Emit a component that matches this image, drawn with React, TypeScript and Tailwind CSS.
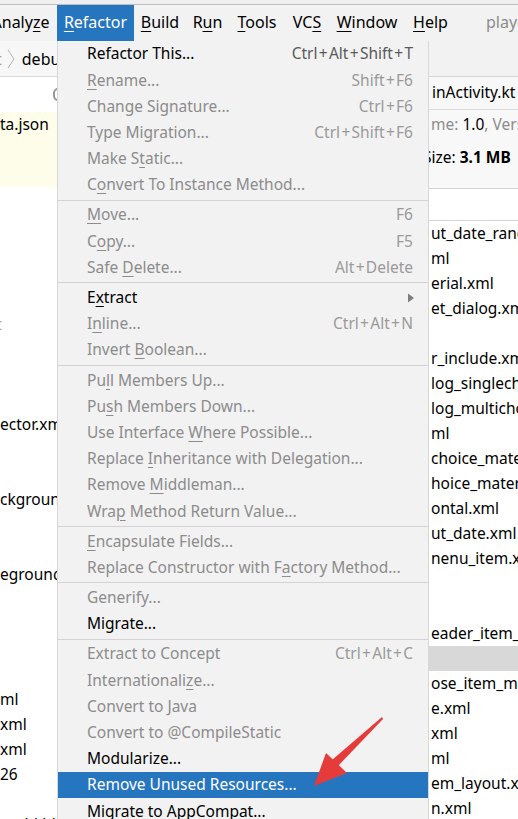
import React from 'react'

// IDE "Refactor" menu opened over the project / APK panels

type Item = {
  label: string
  shortcut?: string
  enabled?: boolean
  active?: boolean
  submenu?: boolean
  dark?: boolean
}

type Entry = Item | 'sep'

const MENU: Entry[] = [
  { label: 'Refactor This...', shortcut: 'Ctrl+Alt+Shift+T', enabled: true, dark: true },
  { label: '&Rename...', shortcut: 'Shift+F6' },
  { label: 'Change Signature...', shortcut: 'Ctrl+F6' },
  { label: 'Type Migration...', shortcut: 'Ctrl+Shift+F6' },
  { label: 'Make S&tatic...' },
  { label: 'C&onvert To Instance Method...' },
  'sep',
  { label: '&Move...', shortcut: 'F6' },
  { label: 'C&opy...', shortcut: 'F5' },
  { label: 'Safe &Delete...', shortcut: 'Alt+Delete' },
  'sep',
  { label: 'E&xtract', enabled: true, submenu: true },
  { label: 'I&nline...', shortcut: 'Ctrl+Alt+N' },
  { label: 'Invert &Boolean...' },
  'sep',
  { label: 'Pu&ll Members Up...' },
  { label: 'Pu&sh Members Down...' },
  { label: 'Use Interface &Where Possible...' },
  { label: 'Replace &Inheritance with Delegation...' },
  { label: 'Remove &Middleman...' },
  { label: 'Wra&p Method Return Value...' },
  'sep',
  { label: '&Encapsulate Fields...' },
  { label: 'Replace Constructor with F&actory Method...' },
  'sep',
  { label: 'Generify...' },
  { label: 'Migrate...', enabled: true },
  'sep',
  { label: 'Extract to Concept', shortcut: 'Ctrl+Alt+C' },
  { label: 'Internationali&ze...' },
  { label: 'Convert to Java' },
  { label: 'Convert to @CompileStatic' },
  { label: 'Modularize...', enabled: true },
  { label: 'Remove Unused Resources...', enabled: true, active: true },
  { label: 'Migrate to AppCompat...', enabled: true },
]

const BAR = [
  { label: 'Analy&ze', w: 'w-[73px] -ml-[16px]' },
  { label: '&Refactor', w: 'w-[77px]', active: true },
  { label: '&Build', w: 'w-[52px]' },
  { label: 'R&un', w: 'w-[43px]' },
  { label: '&Tools', w: 'w-[56px]' },
  { label: 'VC&S', w: 'w-[44px]' },
  { label: '&Window', w: 'w-[76px]' },
  { label: '&Help', w: 'w-[51px]' },
]

const LEFT_ROWS: { text: string; gray?: boolean; shift?: string }[] = [
  { text: '' }, { text: '' }, { text: '' }, { text: '' }, { text: '' },
  { text: 't', gray: true, shift: '-ml-[4px]' },
  { text: '' }, { text: '' }, { text: '' },
  { text: 'ector.xml' },
  { text: '' }, { text: '' },
  { text: 'ckground' },
  { text: '' }, { text: '' },
  { text: 'eground' },
  { text: '' }, { text: '' }, { text: '' }, { text: '' },
  { text: 'ml' },
  { text: 'xml' },
  { text: 'xml' },
  { text: '26' },
  { text: '' },
  { text: 'u_bkbk', shift: 'ml-[8px]' },
]

const RIGHT_ROWS: { text: string; band?: boolean }[] = [
  { text: 'ut_date_range.xml' },
  { text: 'ml' },
  { text: 'erial.xml' },
  { text: 'et_dialog.xml' },
  { text: '' },
  { text: 'r_include.xml' },
  { text: 'log_singlechoice' },
  { text: 'log_multichoice' },
  { text: 'ml' },
  { text: 'choice_material' },
  { text: 'hoice_material' },
  { text: 'ontal.xml' },
  { text: 'ut_date.xml' },
  { text: 'nenu_item.xml' },
  { text: '' },
  { text: '' },
  { text: 'eader_item_layout' },
  { text: '', band: true },
  { text: 'ose_item_material' },
  { text: 'e.xml' },
  { text: 'xml' },
  { text: 'ml' },
  { text: 'em_layout.xml' },
  { text: 'n.xml' },
]

function Label({ text }: { text: string }) {
  const i = text.indexOf('&')
  if (i < 0) return <>{text}</>
  return (
    <>
      {text.slice(0, i)}
      <span className="underline underline-offset-[3px] decoration-1">{text[i + 1]}</span>
      {text.slice(i + 2)}
    </>
  )
}

// the '+' in keystrokes is drawn wider than in Noto Sans
function Shortcut({ keys }: { keys: string }) {
  const parts = keys.split('+')
  return (
    <>
      {parts.map((p, i) => (
        <React.Fragment key={i}>
          {i > 0 && <span className="mx-[1.3px]">+</span>}
          {p}
        </React.Fragment>
      ))}
    </>
  )
}

function MenuRow({ item }: { item: Item }) {
  const color = item.active ? 'bg-[#2675bf] text-white' : item.enabled ? 'text-black' : 'text-[#8c8c8c]'
  const sc = item.dark ? 'text-[#5a5a5a]' : 'text-[#9a9a9a]'
  return (
    <div className={`flex items-center justify-between h-[26.2px] pl-[29px] pr-[15px] whitespace-nowrap ${color}`}>
      <span>
        <Label text={item.label} />
      </span>
      {item.shortcut && (
        <span className={sc}>
          <Shortcut keys={item.shortcut} />
        </span>
      )}
      {item.submenu && (
        <svg width="8" height="10" viewBox="0 0 8 10" className="mr-[-2px]">
          <path d="M1 0.5 L7 5 L1 9.5 Z" fill="#7d7d7d" />
        </svg>
      )}
    </div>
  )
}

export default function App() {
  return (
    <div className="relative w-[518px] h-[819px] overflow-hidden bg-white font-['Noto_Sans','Open_Sans',sans-serif] text-[15.5px] leading-none text-black">
      {/* menu bar */}
      <div className="h-[4px] bg-[#efefef]" />
      <div className="flex items-stretch h-[37px] bg-[#f2f2f2] border-t border-[#bdbdbd] text-[16px] whitespace-nowrap">
        {BAR.map(b => (
          <div
            key={b.label}
            className={`flex items-center justify-center shrink-0 ${b.w} ${b.active ? 'bg-[#2675bf] text-white' : 'text-black'}`}
          >
            <span className="-mt-[2px]">
              <Label text={b.label} />
            </span>
          </div>
        ))}
        <div className="flex items-center ml-[30px] text-[#8c8c8c]">
          <span className="-mt-[2px]">player</span>
        </div>
      </div>

      <div className="flex">
        {/* left project panel */}
        <div className="w-[57px] shrink-0 overflow-hidden whitespace-nowrap">
          <div className="flex items-center h-[36px] bg-[#f7f7f7] border-b border-[#d9d9d9] text-[16px]">
            <span className="shrink-0 -ml-[4px] text-[#a0a0a0]">t</span>
            <svg width="8" height="20" viewBox="0 0 8 20" className="shrink-0 ml-[5px]">
              <path d="M1 1 L7 10 L1 19" fill="none" stroke="#b4b4b4" strokeWidth="1" />
            </svg>
            <span className="shrink-0 ml-[7px]">debug</span>
          </div>
          <div className="flex items-center justify-end h-[35px]">
            <div className="shrink-0 w-[10px] h-[13px] -mr-[6px] rounded-full border-2 border-[#9a9a9a]" />
          </div>
          <div className="bg-[#fdfdea] h-[75px]">
            <div className="flex items-center h-[25px]">
              <span>ta.json</span>
            </div>
          </div>
          {LEFT_ROWS.map((r, i) => (
            <div key={i} className="flex items-center h-[25px]">
              <span className={`shrink-0 ${r.gray ? 'text-[#9a9a9a]' : ''} ${r.shift ?? ''}`}>{r.text}</span>
            </div>
          ))}
        </div>

        {/* Refactor dropdown */}
        <div className="w-[372px] shrink-0 bg-[#f2f2f2] border-l border-[#d8d8d8] border-r border-[#c3c3c3]">
          {MENU.map((e, i) =>
            e === 'sep' ? (
              <div key={i} className="flex items-center h-[4px]">
                <div className="w-full h-px bg-[#d3d3d3]" />
              </div>
            ) : (
              <MenuRow key={i} item={e} />
            ),
          )}
        </div>

        {/* right APK analyzer panel */}
        <div className="flex-1 min-w-0 overflow-hidden whitespace-nowrap">
          <div className="h-[36px] bg-[#f2f2f2] border-b border-[#d4d4d4]" />
          <div className="flex items-center h-[33px] pl-[3px] bg-[#f8f8f8] border-b border-[#dcdcdc]">
            <span className="shrink-0">inActivity.kt</span>
          </div>
          <div className="bg-[#f8f8f8] h-[78px]">
            <div className="flex items-center h-[30px] pl-[2px]">
              <span className="shrink-0 text-[#8c8c8c]">me:&nbsp;</span>
              <span className="shrink-0">1.0</span>
              <span className="shrink-0 text-[#8c8c8c]">, Version</span>
            </div>
            <div className="flex items-center h-[36px] -ml-[6px]">
              <span className="shrink-0">Size:&nbsp;</span>
              <span className="shrink-0 font-bold">3.1 MB</span>
            </div>
          </div>
          <div className="h-[33px] bg-white border-y border-[#d4d4d4]" />
          {RIGHT_ROWS.map((r, i) => (
            <div
              key={i}
              className={`flex items-center h-[25px] pl-[2px] ${r.band ? 'bg-[#d8d8d8]' : 'bg-white'}`}
            >
              <span className="shrink-0">{r.text}</span>
            </div>
          ))}
        </div>
      </div>

      {/* red annotation arrow */}
      <svg className="absolute left-0 top-0 pointer-events-none" width="518" height="819" viewBox="0 0 518 819">
        <path d="M382 717 L383 719 L338 766 L332 760 Z" fill="#e63b3b" />
        <path d="M314 786 L326 753 L347 773 Z" fill="#e63b3b" />
      </svg>
    </div>
  )
}
